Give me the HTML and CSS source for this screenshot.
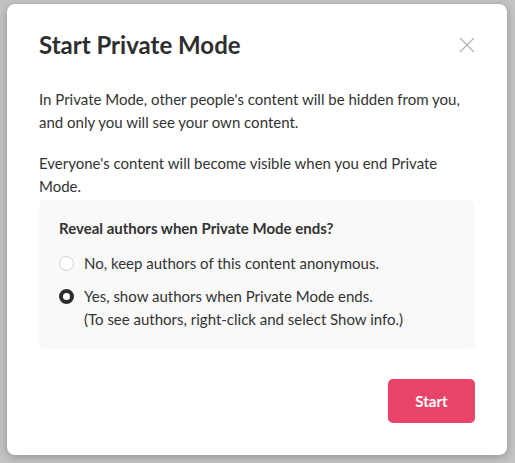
FILE: index.html
```html
<!DOCTYPE html>
<html lang="en">
<head>
  <meta charset="UTF-8">
  <title>Start Private Mode</title>
  <link rel="stylesheet" href="styles.css">
</head>
<body>
  <div class="dialog">
    <div class="dialog-header">
      <h1>Start Private Mode</h1>
      <button class="close-button" aria-label="Close">
        <svg width="16" height="16" viewBox="0 0 16 16"><path d="M1 1 L15 15 M15 1 L1 15" stroke="#b4b4b4" stroke-width="1.3" fill="none"/></svg>
      </button>
    </div>
    <p>In Private Mode, other people's content will be hidden from you, and only you will see your own content.</p>
    <p>Everyone's content will become visible when you end Private Mode.</p>
    <div class="options">
      <h2>Reveal authors when Private Mode ends?</h2>
      <label class="option">
        <span class="radio"></span>
        <span>No, keep authors of this content anonymous.</span>
      </label>
      <label class="option">
        <span class="radio checked"></span>
        <span>Yes, show authors when Private Mode ends.<br>(To see authors, right-click and select Show info.)</span>
      </label>
    </div>
    <div class="dialog-footer">
      <button class="start-button">Start</button>
    </div>
  </div>
</body>
</html>
```

FILE: styles.css
```css
body {
  margin: 0;
  padding: 4px 8px 8px 7px;
  background-color: #c4c4c4;
  font-family: Lato, "Open Sans", sans-serif;
  color: #333;
}

.dialog {
  width: 500px;
  height: 451px;
  box-sizing: border-box;
  padding: 26px 32px 0 32px;
  background-color: #fff;
  border-radius: 8px;
  box-shadow: 0 2px 10px rgba(0, 0, 0, 0.25);
}

.dialog-header {
  display: flex;
  justify-content: space-between;
  align-items: center;
  margin-bottom: 29px;
}

h1 {
  margin: 0;
  font-size: 24px;
  font-weight: 700;
  color: #2e2e2e;
}

.close-button {
  background: none;
  border: none;
  padding: 0;
  cursor: pointer;
  display: flex;
}

p {
  margin: 0 0 18px 0;
  font-size: 15px;
  line-height: 23px;
}

.options {
  margin-top: -16px;
  padding: 19px 20px 18px 20px;
  background-color: #f9f9f9;
  border-radius: 6px;
}

h2 {
  margin: 0 0 15px 0;
  font-size: 15px;
  font-weight: 700;
  color: #333;
}

.option {
  display: flex;
  align-items: flex-start;
  gap: 10px;
  font-size: 15px;
  line-height: 23px;
  margin-bottom: 10px;
}

.option:last-child {
  margin-bottom: 0;
}

.radio {
  flex: none;
  width: 15px;
  height: 15px;
  margin-top: 4px;
  box-sizing: border-box;
  border: 1px solid #cfcfcf;
  border-radius: 50%;
  background-color: #fff;
}

.radio.checked {
  border: 4.5px solid #2e2e2e;
}

.dialog-footer {
  display: flex;
  justify-content: flex-end;
  margin-top: 30px;
}

.start-button {
  width: 87px;
  height: 44px;
  border: none;
  border-radius: 5px;
  background-color: #e8446a;
  color: #fff;
  font-family: inherit;
  font-size: 15px;
  font-weight: 700;
  cursor: pointer;
}
```
